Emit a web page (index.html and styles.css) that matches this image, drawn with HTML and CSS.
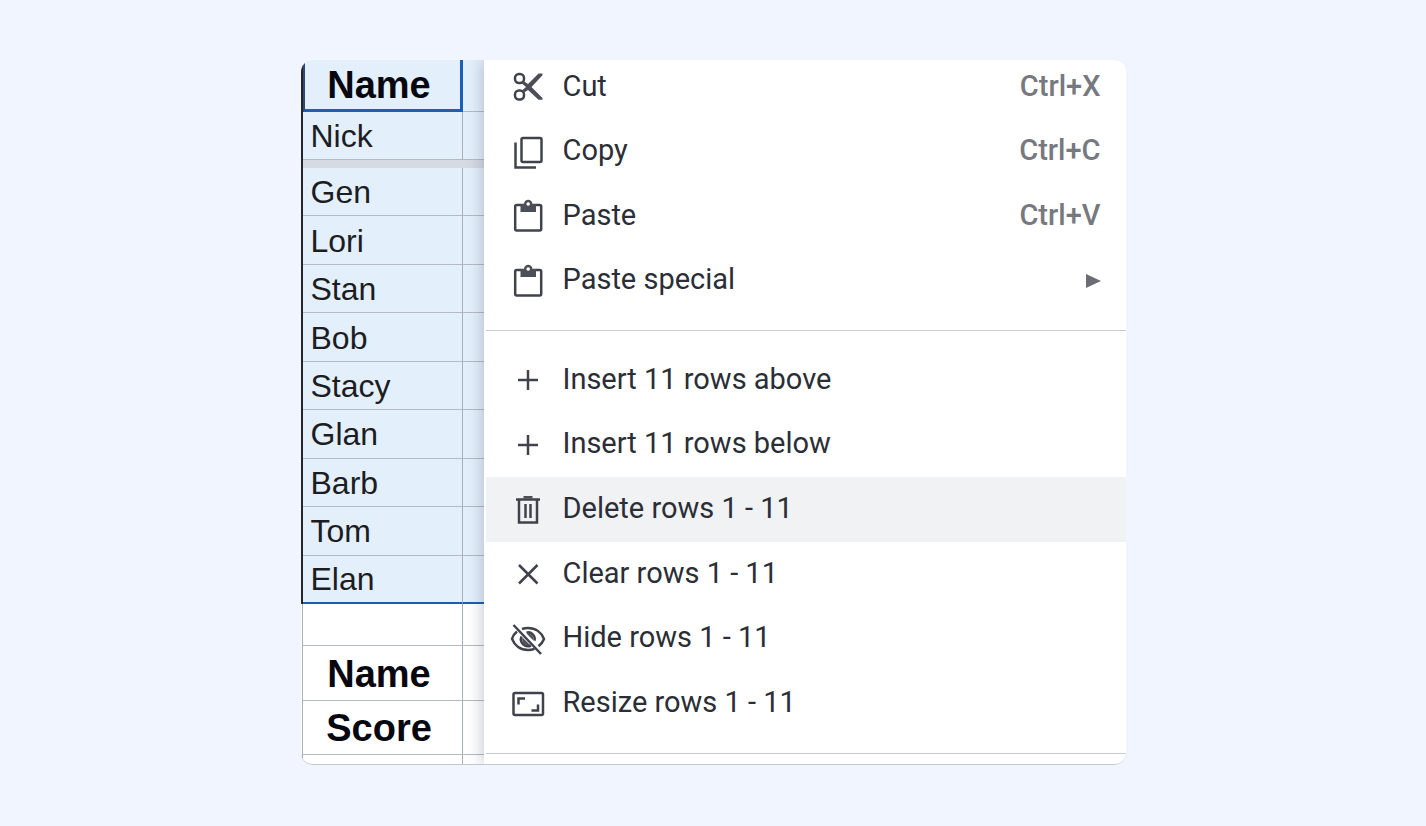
FILE: index.html
```html
<!DOCTYPE html>
<html lang="en">
<head>
  <meta charset="UTF-8">
  <meta name="viewport" content="width=device-width, initial-scale=1">
  <title>Delete rows</title>
  <link rel="stylesheet" href="styles.css">
</head>
<body>

  <main class="card">
    <table class="sheet">
      <thead class="selected">
        <tr class="head-row"><th scope="col" class="active">Name</th><td></td></tr>
        <tr class="frozen-row"><td>Nick</td><td></td></tr>
      </thead>
      <tbody class="names selected">
        <tr><td>Gen</td><td></td></tr>
        <tr><td>Lori</td><td></td></tr>
        <tr><td>Stan</td><td></td></tr>
        <tr><td>Bob</td><td></td></tr>
        <tr><td>Stacy</td><td></td></tr>
        <tr><td>Glan</td><td></td></tr>
        <tr><td>Barb</td><td></td></tr>
        <tr><td>Tom</td><td></td></tr>
        <tr><td>Elan</td><td></td></tr>
      </tbody>
      <tbody class="rest">
        <tr class="empty-row"><td></td><td></td></tr>
        <tr><th scope="row">Name</th><td></td></tr>
        <tr><th scope="row">Score</th><td></td></tr>
        <tr class="last-row"><td></td><td></td></tr>
      </tbody>
    </table>

    <div class="menu">
      <div class="group group-edit">
        <button class="item" type="button">
          <svg class="icon" viewBox="0 0 36 36">
            <rect x="5" y="5" width="9" height="9" rx="4"/>
            <rect x="5" y="21.5" width="9" height="9" rx="4"/>
            <path class="solid" d="M28.500 4.500h4v1.700L21.500 18 32.500 29v1.700h-4L18 21l-4.500 3-1.500-2.500 4-3.500-4-3.500 1.500-2.500 4.500 3z"/>
          </svg>
          <span class="label">Cut</span>
          <kbd>Ctrl+X</kbd>
        </button>
        <button class="item" type="button">
          <svg class="icon" viewBox="0 0 36 36">
            <rect x="11.500" y="4" width="20" height="24" rx="1.500"/>
            <path d="M5.500 8.500v25H26"/>
          </svg>
          <span class="label">Copy</span>
          <kbd>Ctrl+C</kbd>
        </button>
        <button class="item" type="button">
          <svg class="icon" viewBox="0 0 36 36">
            <rect x="5.200" y="7" width="26" height="25.500" rx="1.500"/>
            <path class="solid" d="M10.500 6H14a4.200 4.200 0 0 1 8.400 0H26v8H10.500z"/>
            <circle class="hole" cx="18.200" cy="6" r="1.800"/>
          </svg>
          <span class="label">Paste</span>
          <kbd>Ctrl+V</kbd>
        </button>
        <button class="item" type="button">
          <svg class="icon" viewBox="0 0 36 36">
            <rect x="5.200" y="7" width="26" height="25.500" rx="1.500"/>
            <path class="solid" d="M10.500 6H14a4.200 4.200 0 0 1 8.400 0H26v8H10.500z"/>
            <circle class="hole" cx="18.200" cy="6" r="1.800"/>
          </svg>
          <span class="label">Paste special</span>
          <svg class="arrow" viewBox="0 0 15 14"><path d="M0 0 15 7 0 14z"/></svg>
        </button>
      </div>

      <hr>

      <div class="group group-rows">
        <button class="item" type="button">
          <svg class="icon" viewBox="0 0 36 36"><path d="M18 8v20M8 18h20"/></svg>
          <span class="label">Insert 11 rows above</span>
        </button>
        <button class="item" type="button">
          <svg class="icon" viewBox="0 0 36 36"><path d="M18 8v20M8 18h20"/></svg>
          <span class="label">Insert 11 rows below</span>
        </button>
        <button class="item current" type="button">
          <svg class="icon" viewBox="0 0 36 36">
            <path d="M6 7.500h24"/>
            <path class="solid" d="M13.500 6.500V4h9v2.500z"/>
            <path d="M9 7.500V30.500h18V7.500M15.500 12v14M20.500 12v14"/>
          </svg>
          <span class="label">Delete rows 1 - 11</span>
        </button>
        <button class="item" type="button">
          <svg class="icon" viewBox="0 0 36 36"><path d="M9 9l18.500 18.500M27.500 9L9 27.500"/></svg>
          <span class="label">Clear rows 1 - 11</span>
        </button>
        <button class="item" type="button">
          <svg class="icon" viewBox="0 0 36 36">
            <path d="M7 10.500C4.500 12.500 2.800 15 2 17.800 4.500 24.500 10.500 29 18 29c2.500 0 4.500-.4 6.500-1.200M12 8c2-.7 4-1 6-1 7.500 0 13.500 4.300 16 11-1.200 3-3 5.500-5.500 7.300"/>
            <path d="M11.500 15.500a7 7 0 0 0 9.500 9M16.500 11.600a6.600 6.600 0 0 1 8 8"/>
            <path class="solid" d="M17 12.500a6 6 0 0 1 6.500 7l-6.500-6.500zM12.500 16.500l7.500 7.500a6 6 0 0 1-7.500-7.500z"/>
            <path d="M3.500 4 31 33"/>
          </svg>
          <span class="label">Hide rows 1 - 11</span>
        </button>
        <button class="item" type="button">
          <svg class="icon" viewBox="0 0 36 36">
            <rect x="3.500" y="7" width="29.500" height="22" rx="1.500"/>
            <path d="M8.500 18.500v-6H15M28 18.500v6H21.500"/>
          </svg>
          <span class="label">Resize rows 1 - 11</span>
        </button>
      </div>

      <hr>
    </div>
  </main>

</body>
</html>
```

FILE: styles.css
```css
* {
  box-sizing: border-box;
}

body {
  margin: 0;
  min-height: 100vh;
  padding: 60px 24px;
  display: flex;
  align-items: flex-start;
  justify-content: center;
  background: #f0f5ff;
  font-family: Roboto, sans-serif;
}

.card {
  display: flex;
  width: 100%;
  max-width: 825px;
  background: #fff;
  border-radius: 12px;
  border-bottom: 1px solid #c4c7cc;
  overflow: hidden;
}

/* spreadsheet */
.sheet {
  display: block;
  flex: 0 0 183px;
  font-family: "Liberation Sans", Arial, sans-serif;
  font-size: 32px;
  color: #1c1d22;
}

.sheet thead,
.sheet tbody {
  display: grid;
  border-left: 2px solid #24262c;
}

.sheet tr {
  display: grid;
  grid-template-columns: 160px 1fr;
}

.sheet th,
.sheet td {
  display: flex;
  align-items: center;
  padding: 2px 0 0 8px;
  border-bottom: 1px solid #b4b9c2;
}

.sheet th,
.sheet td:first-child {
  border-right: 1px solid #a9aeb8;
}

.sheet th {
  justify-content: center;
  padding: 2px 6px 0 0;
  font-size: 38px;
  font-weight: bold;
  color: #07080f;
}

.selected {
  background: #e4effc;
}

.head-row {
  height: 52px;
}

.sheet .active {
  border-right: 3px solid #1b5fb8;
  border-bottom: 3px solid #1b5fb8;
  border-left: 2px solid #2c4a78;
}

.frozen-row {
  height: 56px;
  border-bottom: 8px solid #d5dae3;
}

.sheet .names {
  grid-auto-rows: 1fr;
  height: 436px;
}

.sheet .names tr:last-child td {
  border-bottom: 2px solid #1f5cab;
}

.sheet .rest {
  grid-template-rows: 42px 55px 54px 9px;
  border-left: 1px solid #a9aeb8;
  margin-left: 1px;
}

.sheet .last-row td {
  padding: 0;
  border-bottom: none;
}

/* context menu */
.menu {
  flex: 1;
  min-width: 0;
  background: #fff;
  box-shadow: 0 0 16px rgba(60, 70, 90, 0.35);
}

.group {
  display: grid;
  grid-auto-rows: 1fr;
}

.group-edit {
  height: 258px;
  margin-top: -5px;
}

.group-rows {
  height: 388px;
}

.menu hr {
  height: 1px;
  margin: 17px 0 17px 2px;
  border: none;
  background: #c9ccd0;
}

.menu hr:last-child {
  margin-bottom: 0;
}

.item {
  display: flex;
  align-items: center;
  gap: 17px;
  margin: 0 0 0 2px;
  padding: 0 25px 0 24px;
  border: none;
  background: none;
  font: inherit;
  font-size: 29px;
  color: #2b2e36;
  text-align: left;
  cursor: pointer;
}

.item:hover,
.item.current {
  background: #f0f2f4;
}

.label {
  flex: 1;
  padding-bottom: 3px;
}

.item kbd {
  padding-bottom: 3px;
  font-family: inherit;
  font-size: 29px;
  font-weight: 500;
  color: #77797e;
}

.icon {
  flex: none;
  width: 36px;
  height: 36px;
  fill: none;
  stroke: #40434b;
  stroke-width: 2.5;
}

.icon .solid {
  fill: #4c4f57;
  stroke: none;
}

.icon .hole {
  fill: #fff;
  stroke: none;
}

.arrow {
  width: 15px;
  height: 14px;
  fill: #6b6d72;
}
```
